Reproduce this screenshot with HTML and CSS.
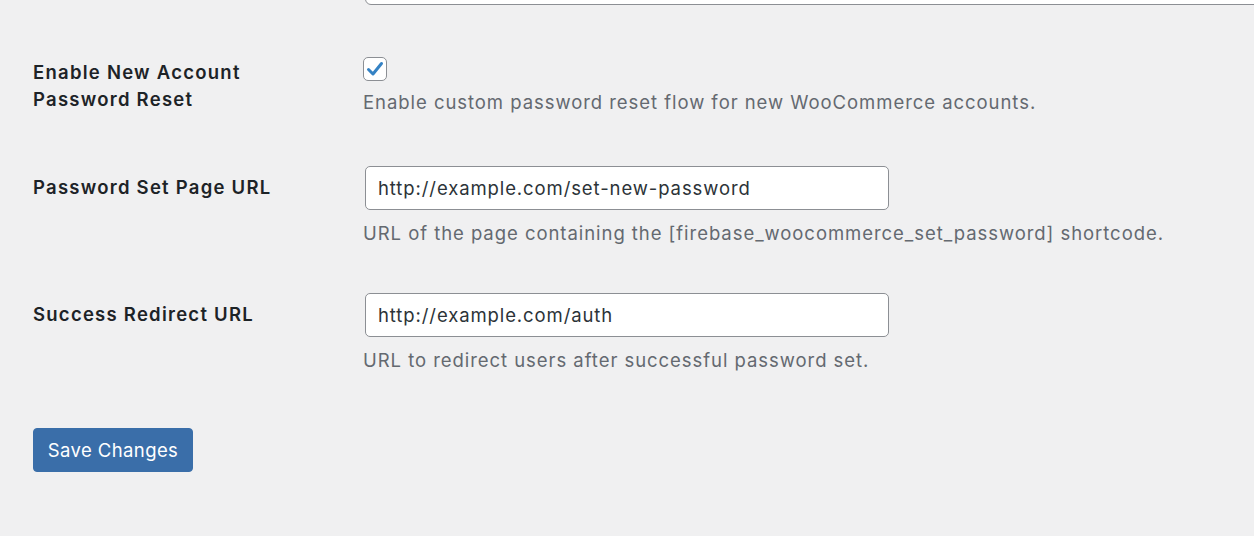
FILE: index.html
```html
<!DOCTYPE html>
<html lang="en">
<head>
<meta charset="utf-8">
<title>Settings</title>
<link rel="stylesheet" href="styles.css">
</head>
<body>
<div class="page">
  <div class="top-row">
    <div class="top-field"></div>
  </div>

  <div class="row row-first">
    <div class="th">Enable New Account<br>Password Reset</div>
    <div class="td td-check">
      <span class="checkbox">
        <svg width="18" height="16" viewBox="0 0 18 16" aria-hidden="true"><path d="M2.5 8.5 L7 13 L15.5 2.5" fill="none" stroke="#3582c4" stroke-width="3" stroke-linecap="round" stroke-linejoin="round"/></svg>
      </span>
      <p class="desc desc-check">Enable custom password reset flow for new WooCommerce accounts.</p>
    </div>
  </div>

  <div class="row">
    <div class="th th-input">Password Set Page URL</div>
    <div class="td td-input">
      <div class="field">http://example.com/set-new-password</div>
      <p class="desc">URL of the page containing the [firebase_woocommerce_set_password] shortcode.</p>
    </div>
  </div>

  <div class="row">
    <div class="th th-input">Success Redirect URL</div>
    <div class="td td-input">
      <div class="field">http://example.com/auth</div>
      <p class="desc">URL to redirect users after successful password set.</p>
    </div>
  </div>

  <div class="submit">
    <button class="button-primary" type="button">Save Changes</button>
  </div>
</div>
</body>
</html>
```

FILE: styles.css
```css
html, body {
  margin: 0;
  padding: 0;
  background: #f0f0f1;
}
body {
  font-family: Inter, "Liberation Sans", Arial, sans-serif;
  font-size: 18.5px;
  color: #1d2327;
  overflow: hidden;
  height: 536px;
}
.page {
  padding-left: 33px;
}
.top-row {
  display: grid;
  grid-template-columns: 332px 1fr;
}
.top-field {
  grid-column: 2;
  height: 44px;
  margin-top: -39px;
  margin-right: -40px;
  background: #fff;
  border: 1px solid #8c8f94;
  border-radius: 6px;
  box-sizing: border-box;
}
.row {
  display: grid;
  grid-template-columns: 330px 1fr;
}
.row-first {
  margin-top: 25px;
}
.th {
  font-weight: 600;
  line-height: 27px;
  letter-spacing: 1.25px;
  padding-top: 28.5px;
  padding-bottom: 28.5px;
}
.th-input {
  padding-top: 32.5px;
  padding-bottom: 0;
}
.td {
  padding-bottom: 21.5px;
}
.td-check {
  padding-top: 27px;
}
.td-input {
  padding-top: 25px;
}
.checkbox {
  display: flex;
  align-items: center;
  justify-content: center;
  width: 24px;
  height: 24px;
  box-sizing: border-box;
  border: 1px solid #8c8f94;
  border-radius: 5px;
  background: #fff;
}
.field {
  width: 524px;
  height: 44px;
  box-sizing: border-box;
  margin-left: 2px;
  padding: 0 12px;
  display: flex;
  align-items: center;
  background: #fff;
  border: 1px solid #8c8f94;
  border-radius: 5px;
  color: #2c3338;
  letter-spacing: 0.9px;
}
.desc {
  margin: 9.5px 0 0;
  line-height: 27px;
  color: #646970;
  letter-spacing: 0.95px;
}
.desc-check {
  margin-top: 7.5px;
}
.submit {
  margin-top: 33px;
}
.button-primary {
  font-family: inherit;
  font-size: 18.5px;
  letter-spacing: 0.4px;
  width: 160px;
  height: 44px;
  background: #3a6ea9;
  color: #fff;
  border: 1px solid #3a6ea9;
  border-radius: 4px;
  padding: 0;
  cursor: pointer;
}
```
